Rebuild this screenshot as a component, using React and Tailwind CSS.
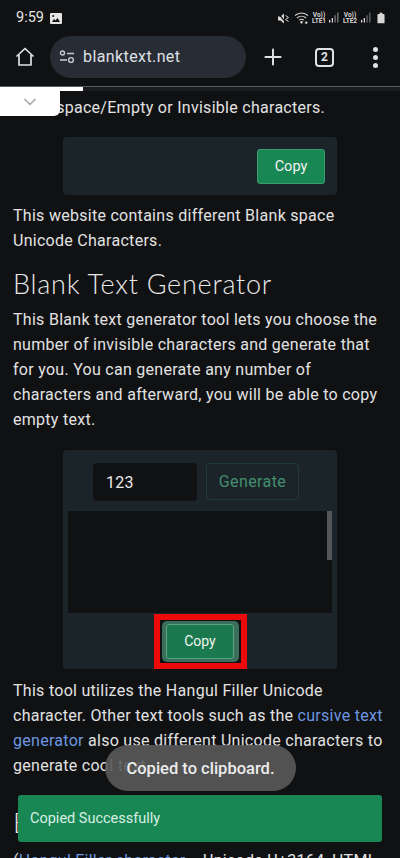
import { ChevronDown, Plus } from 'lucide-react'

function StatusIcons() {
  return (
    <div className="flex items-center text-[#d8d8d8]">
      {/* muted speaker */}
      <svg className="w-[11px] h-[13px]" viewBox="0 0 11 13" fill="currentColor">
        <path d="M0 4.5h2.5L6 1.5v10l-3.5-3H0z" />
        <path d="M0 1l9 11" stroke="#101113" strokeWidth="1.2" />
        <path d="M7.5 3.5l3 2-3 2 3 2" fill="none" stroke="currentColor" strokeWidth="1" />
      </svg>
      {/* wifi */}
      <svg className="w-[16px] h-[14px] ml-[5px]" viewBox="0 0 17 14" fill="none" stroke="currentColor" strokeWidth="1.1">
        <path d="M1 4.5c4-3.8 10-3.8 14 0" />
        <path d="M3.2 7c2.8-2.5 6.8-2.5 9.6 0" />
        <path d="M5.5 9.3c1.6-1.3 3.4-1.3 5 0" />
        <circle cx="8" cy="11.5" r="0.8" fill="currentColor" />
        <path d="M13 10.5v3M11.5 12h3" />
      </svg>
      <div className="w-[14px] ml-[2px] flex flex-col items-center text-[6.5px] leading-[6.5px] font-bold">
        <span>Vo))</span>
        <span>LTE1</span>
      </div>
      <svg className="w-[10px] h-[12px] ml-[3px]" viewBox="0 0 11 12" fill="currentColor">
        <rect x="0" y="8" width="1.4" height="3" />
        <rect x="3" y="6" width="1.4" height="5" />
        <rect x="6" y="3" width="1.4" height="8" opacity="0.55" />
        <rect x="9" y="0" width="1.4" height="11" opacity="0.55" />
      </svg>
      <div className="w-[14px] ml-[4px] flex flex-col items-center text-[6.5px] leading-[6.5px] font-bold">
        <span>Vo))</span>
        <span>LTE2</span>
      </div>
      <svg className="w-[10px] h-[12px] ml-[4px]" viewBox="0 0 11 12" fill="currentColor">
        <rect x="0" y="8" width="1.4" height="3" />
        <rect x="3" y="6" width="1.4" height="5" />
        <rect x="6" y="3" width="1.4" height="8" opacity="0.45" />
        <rect x="9" y="0" width="1.4" height="11" opacity="0.45" />
      </svg>
      {/* battery */}
      <svg className="w-[8px] h-[12px] ml-[6px]" viewBox="0 0 9 12" fill="currentColor">
        <rect x="3" y="0" width="3" height="1.5" />
        <rect x="0.5" y="1.5" width="8" height="10.5" rx="1" />
      </svg>
    </div>
  )
}

function Header() {
  return (
    <div className="shrink-0 bg-[#101113]">
      <div className="h-[36px] pl-[16px] pr-[15px] flex items-center justify-between">
        <div className="flex items-center gap-[6px]">
          <span className="text-[14.5px] leading-[34px] text-[#e4e4e4]">9:59</span>
          <svg className="w-[12px] h-[11px]" viewBox="0 0 12 11" fill="#e4e4e4">
            <path fillRule="evenodd" d="M1 0h10a1 1 0 011 1v9a1 1 0 01-1 1H1a1 1 0 01-1-1V1a1 1 0 011-1zm1 9h8L7.5 5 5.5 7.5 4 6z" />
            <circle cx="3.2" cy="3" r="1" fill="#101113" />
          </svg>
        </div>
        <StatusIcons />
      </div>
      <div className="h-[42px] flex items-center">
        <div className="w-[50px] flex justify-center">
          <svg className="w-[20px] h-[20px]" viewBox="0 0 20 20" fill="none" stroke="#dfe1e5" strokeWidth="1.7" strokeLinejoin="round">
            <path d="M1.5 9.5L10 1.5l8.5 8M4 8v10h12V8" />
          </svg>
        </div>
        <div className="w-[196px] h-[42px] rounded-full bg-[#282c35] flex items-center pl-[9px]">
          <svg className="w-[16px] h-[14px]" viewBox="0 0 16 14" fill="none" stroke="#c8cbd2" strokeWidth="1.4">
            <circle cx="3.5" cy="3" r="2" />
            <path d="M8 3.5h7M1 10h7" />
            <circle cx="12" cy="10" r="2.4" />
          </svg>
          <span className="ml-[8px] text-[16px] text-[#dfe1e5] tracking-[0.4px]">blanktext.net</span>
        </div>
        <div className="flex-1 flex items-center">
          <Plus className="ml-[14px] w-[26px] h-[26px] text-[#dfe1e5]" strokeWidth={1.8} />
          <div className="ml-[29px] w-[19px] h-[19px] rounded-[4px] border-2 border-[#dfe1e5] flex items-center justify-center text-[12px] font-bold text-[#dfe1e5]">
            2
          </div>
          <div className="ml-[39px] flex flex-col gap-[3px]">
            <span className="w-[5px] h-[5px] rounded-full bg-[#dfe1e5]" />
            <span className="w-[5px] h-[5px] rounded-full bg-[#dfe1e5]" />
            <span className="w-[5px] h-[5px] rounded-full bg-[#dfe1e5]" />
          </div>
        </div>
      </div>
      <div className="h-[8px]" />
      <div className="h-[1px] bg-[#5a5c60]" />
      <div className="h-[4px] bg-[#1b1c1f]">
        <div className="w-[83px] h-full bg-white" />
      </div>
    </div>
  )
}

export default function App() {
  return (
    <div className="relative w-[400px] h-[858px] overflow-hidden bg-[#101113] flex flex-col font-['Roboto',sans-serif]">
      <Header />

      <div className="px-[13px] pt-[4px] text-[16px] leading-[25px] text-[#e2e2e2] tracking-[0.28px]">
        <p className="whitespace-nowrap -ml-[2px]">Blank space/Empty or Invisible characters.</p>

        <div className="mx-[50px] mt-[17px] h-[58px] rounded-[4px] bg-[#1b2429] flex items-center justify-end pr-[12px]">
          <button className="w-[68px] h-[35px] rounded-[3px] bg-[#198754] border border-[#3c9c70] text-[#f2f2f2] text-[14.5px] tracking-normal">
            Copy
          </button>
        </div>

        <p className="mt-[8px]">This website contains different Blank space<br />Unicode Characters.</p>

        <h2 className="mt-[13px] text-[27px] leading-[36px] font-['Lato',sans-serif] font-light text-[#e8e8e8] tracking-[0.75px]">
          Blank Text Generator
        </h2>

        <p className="mt-[5px]">
          This Blank text generator tool lets you choose the number of invisible characters and generate that for you. You can generate any number of characters and afterward, you will be able to copy empty text.
        </p>

        <div className="mx-[50px] mt-[18px] h-[219px] rounded-[4px] bg-[#1b2429] px-[5px] pt-[13px] flex flex-col">
          <div className="flex pl-[25px] gap-[9px]">
            <div className="w-[104px] h-[38px] rounded-[4px] bg-[#101113] flex items-center pl-[13px] text-[#e8e8e8] text-[16px]">
              123
            </div>
            <div className="w-[93px] h-[37px] rounded-[4px] border border-[#213c38] flex items-center justify-center text-[#438f6d] text-[16px] tracking-[0.4px]">
              Generate
            </div>
          </div>
          <div className="relative mt-[10px] h-[102px] bg-[#101113]">
            <div className="absolute right-0 top-0 w-[5px] h-[49px] bg-[#55585b]" />
          </div>
          <div className="flex-1 flex justify-center pt-[1px]">
            <div className="w-[93px] h-[55px] border-[6px] border-[#ec0a0a] bg-[#101113] flex items-center justify-center">
              <div className="w-[77px] h-[41px] rounded-[5px] bg-[#3b6f5c] flex items-center justify-center">
                <button className="w-[68px] h-[35px] rounded-[3px] bg-[#1a7a4e] border border-[#5d9f84] text-[#f2f2f2] text-[14px] tracking-normal">
                  Copy
                </button>
              </div>
            </div>
          </div>
        </div>

        <p className="mt-[9px]">
          This tool utilizes the Hangul Filler Unicode character. Other text tools such as the <a className="text-[#6c97e0]">cursive text generator</a> also use different Unicode characters to generate cool text.
        </p>

        <h2 className="mt-[27px] text-[27px] leading-[36px] font-['Lato',sans-serif] font-light text-[#e8e8e8] tracking-normal">
          Blank Character
        </h2>

        <p className="mt-[7px] whitespace-nowrap">
          (<a className="text-[#6c97e0]">Hangul Filler character</a> = Unicode U+3164, HTML
        </p>
      </div>

      {/* white tab dropped down from the toolbar */}
      <div className="absolute left-0 top-[88px] w-[60px] h-[28px] rounded-br-[6px] bg-white flex items-center justify-center">
        <ChevronDown className="w-[20px] h-[20px] text-[#a9a9a9]" strokeWidth={2} />
      </div>

      {/* system toast, slightly see-through */}
      <div className="absolute left-[105px] top-[745px] w-[191px] h-[46px] pt-[2px] rounded-full bg-[#5a5a5a]/90 flex items-center justify-center text-[16.5px] font-medium text-[#ececec]">
        Copied to clipboard.
      </div>

      {/* green snackbar */}
      <div className="absolute left-[18px] top-[795px] w-[364px] h-[47px] rounded-[3px] bg-[#198754] flex items-center pl-[12px] text-[14.5px] text-[#d8efe3]">
        Copied Successfully
      </div>
    </div>
  )
}
